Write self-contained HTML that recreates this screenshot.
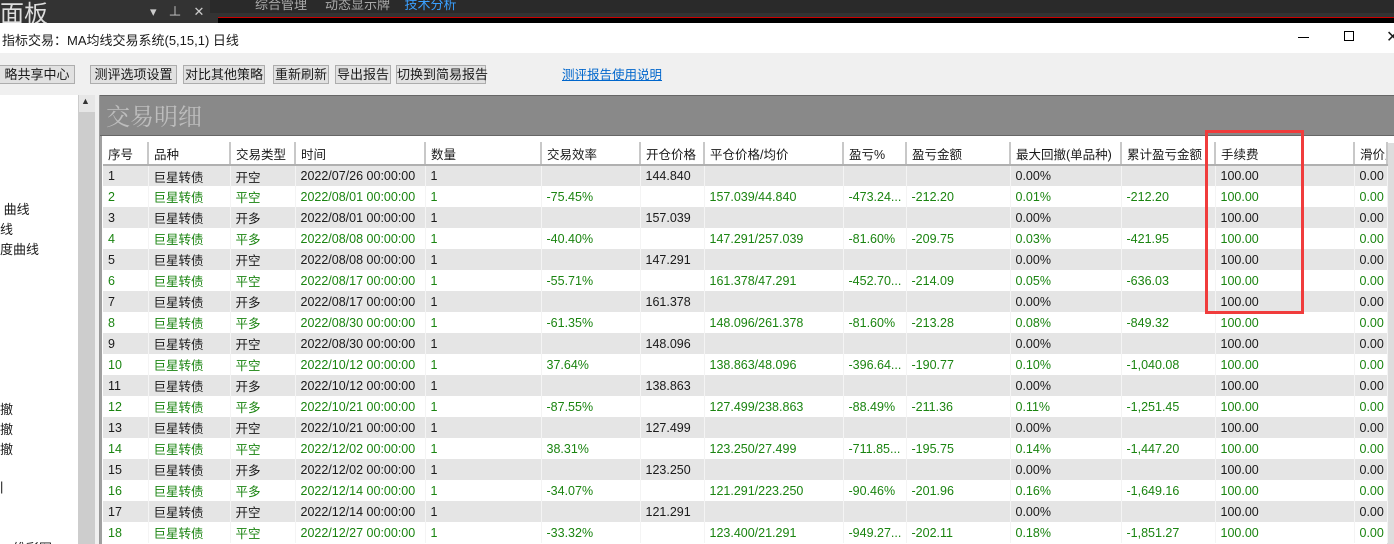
<!DOCTYPE html>
<html><head><meta charset="utf-8"><style>
*{margin:0;padding:0;box-sizing:border-box}
html,body{width:1394px;height:544px;overflow:hidden}
body{position:relative;background:#f0f0f0;font-family:"Liberation Sans","Noto Sans CJK SC",sans-serif;font-size:12px;color:#1a1a1a}
.abs{position:absolute}
.btn{position:absolute;top:65px;height:19px;border:1px solid #adadad;background:#e1e1e1;font-size:13px;line-height:17px;text-align:center;white-space:nowrap}
table{position:absolute;left:103px;top:142px;border-collapse:collapse;table-layout:fixed;width:1284px}
td,th{height:21px;padding:0 0 0 5px;white-space:nowrap;overflow:hidden;font-weight:normal;text-align:left;font-size:12.5px;border-right:1px solid #f4f4f4}
th{height:23px;background:#fff;border-right:2px solid #c8c8c8;border-bottom:2px solid #b0b0b0}
tr.o td{background:#e5e5e5}
tr.e td{background:#fff;color:#1a8410}
.lt{position:absolute;left:0;font-size:13px}
</style></head><body>
<div class="abs" style="left:0;top:0;width:1394px;height:23px;background:#333"></div>
<div class="abs" style="left:0;top:-6px;color:#ddd;font-size:24px">面板</div>
<div class="abs" style="left:150px;top:1px;color:#ccc;font-size:13px;letter-spacing:12px">▾⊥✕</div>
<div class="abs" style="left:210px;top:0;width:1184px;height:13px;background:#2a2a2a"></div>
<div class="abs" style="left:255px;top:-6px;color:#aaa;font-size:13px">综合管理 &nbsp;&nbsp;&nbsp; 动态显示牌 &nbsp;&nbsp; <span style="color:#3aa0ff">技术分析</span></div>
<div class="abs" style="left:218px;top:17px;width:1176px;height:6px;background:#000;border-top:1px solid #c00"></div>
<div class="abs" style="left:0;top:23px;width:1394px;height:30px;background:#fff"></div>
<div class="abs" style="left:2px;top:30px;font-size:13px">指标交易：MA均线交易系统(5,15,1) 日线</div>
<div class="abs" style="left:1298px;top:37px;width:11px;height:1px;background:#000"></div>
<div class="abs" style="left:1344px;top:31px;width:10px;height:10px;border:1px solid #000"></div>
<div class="abs" style="left:1386px;top:27px;font-size:16px">✕</div>
<div class="btn" style="left:-1px;width:76px">略共享中心</div>
<div class="btn" style="left:90px;width:87px">测评选项设置</div>
<div class="btn" style="left:183px;width:82px">对比其他策略</div>
<div class="btn" style="left:273px;width:56px">重新刷新</div>
<div class="btn" style="left:335px;width:56px">导出报告</div>
<div class="btn" style="left:396px;width:90px">切换到简易报告</div>
<div class="abs" style="left:562px;top:64px;font-size:12.5px;color:#0066cc;text-decoration:underline">测评报告使用说明</div>
<div class="abs" style="left:0;top:95px;width:78px;height:449px;background:#fff"></div>
<div class="abs" style="left:78px;top:95px;width:17px;height:449px;background:#e6e6e6;border-left:1px solid #ccc"></div>
<div class="abs" style="left:81px;top:96px;font-size:9px;color:#333">▲</div>
<div class="abs" style="left:78px;top:112px;width:17px;height:432px;background:#cdcdcd"></div>
<div class="abs" style="left:95px;top:95px;width:5px;height:449px;background:#f0f0f0;border-right:1px solid #999"></div>
<div class="lt" style="top:199px">&nbsp;曲线</div>
<div class="lt" style="top:219px">线</div>
<div class="lt" style="top:239px">度曲线</div>
<div class="lt" style="top:399px">撤</div>
<div class="lt" style="top:419px">撤</div>
<div class="lt" style="top:439px">撤</div>
<div class="lt" style="top:479px">|</div>
<div class="lt" style="top:538px">二维彩图</div>
<div class="abs" style="left:100px;top:95px;width:1294px;height:41px;background:#898989;border-top:1px solid #666;border-bottom:1px solid #666"></div>
<div class="abs" style="left:106px;top:97px;font-size:24px;color:#bdbdbd;font-family:'Noto Serif CJK SC',serif">交易明细</div>
<div class="abs" style="left:100px;top:136px;width:1294px;height:408px;background:#fff;border-left:2px solid #a0a0a0"></div>
<div class="abs" style="left:1387px;top:143px;width:7px;height:401px;background:#ddd"></div>
<table>
<colgroup><col style="width:45px"><col style="width:82px"><col style="width:65px"><col style="width:130px"><col style="width:116px"><col style="width:99px"><col style="width:64px"><col style="width:139px"><col style="width:63px"><col style="width:104px"><col style="width:111px"><col style="width:94px"><col style="width:139px"><col style="width:33px"></colgroup>
<tr><th>序号</th><th>品种</th><th>交易类型</th><th>时间</th><th>数量</th><th>交易效率</th><th>开仓价格</th><th>平仓价格/均价</th><th>盈亏%</th><th>盈亏金额</th><th>最大回撤(单品种)</th><th>累计盈亏金额</th><th>手续费</th><th>滑价成</th></tr>
<tr class="o"><td>1</td><td>巨星转债</td><td>开空</td><td>2022/07/26 00:00:00</td><td>1</td><td></td><td>144.840</td><td></td><td></td><td></td><td>0.00%</td><td></td><td>100.00</td><td>0.00</td></tr>
<tr class="e"><td>2</td><td>巨星转债</td><td>平空</td><td>2022/08/01 00:00:00</td><td>1</td><td>-75.45%</td><td></td><td>157.039/44.840</td><td>-473.24...</td><td>-212.20</td><td>0.01%</td><td>-212.20</td><td>100.00</td><td>0.00</td></tr>
<tr class="o"><td>3</td><td>巨星转债</td><td>开多</td><td>2022/08/01 00:00:00</td><td>1</td><td></td><td>157.039</td><td></td><td></td><td></td><td>0.00%</td><td></td><td>100.00</td><td>0.00</td></tr>
<tr class="e"><td>4</td><td>巨星转债</td><td>平多</td><td>2022/08/08 00:00:00</td><td>1</td><td>-40.40%</td><td></td><td>147.291/257.039</td><td>-81.60%</td><td>-209.75</td><td>0.03%</td><td>-421.95</td><td>100.00</td><td>0.00</td></tr>
<tr class="o"><td>5</td><td>巨星转债</td><td>开空</td><td>2022/08/08 00:00:00</td><td>1</td><td></td><td>147.291</td><td></td><td></td><td></td><td>0.00%</td><td></td><td>100.00</td><td>0.00</td></tr>
<tr class="e"><td>6</td><td>巨星转债</td><td>平空</td><td>2022/08/17 00:00:00</td><td>1</td><td>-55.71%</td><td></td><td>161.378/47.291</td><td>-452.70...</td><td>-214.09</td><td>0.05%</td><td>-636.03</td><td>100.00</td><td>0.00</td></tr>
<tr class="o"><td>7</td><td>巨星转债</td><td>开多</td><td>2022/08/17 00:00:00</td><td>1</td><td></td><td>161.378</td><td></td><td></td><td></td><td>0.00%</td><td></td><td>100.00</td><td>0.00</td></tr>
<tr class="e"><td>8</td><td>巨星转债</td><td>平多</td><td>2022/08/30 00:00:00</td><td>1</td><td>-61.35%</td><td></td><td>148.096/261.378</td><td>-81.60%</td><td>-213.28</td><td>0.08%</td><td>-849.32</td><td>100.00</td><td>0.00</td></tr>
<tr class="o"><td>9</td><td>巨星转债</td><td>开空</td><td>2022/08/30 00:00:00</td><td>1</td><td></td><td>148.096</td><td></td><td></td><td></td><td>0.00%</td><td></td><td>100.00</td><td>0.00</td></tr>
<tr class="e"><td>10</td><td>巨星转债</td><td>平空</td><td>2022/10/12 00:00:00</td><td>1</td><td>37.64%</td><td></td><td>138.863/48.096</td><td>-396.64...</td><td>-190.77</td><td>0.10%</td><td>-1,040.08</td><td>100.00</td><td>0.00</td></tr>
<tr class="o"><td>11</td><td>巨星转债</td><td>开多</td><td>2022/10/12 00:00:00</td><td>1</td><td></td><td>138.863</td><td></td><td></td><td></td><td>0.00%</td><td></td><td>100.00</td><td>0.00</td></tr>
<tr class="e"><td>12</td><td>巨星转债</td><td>平多</td><td>2022/10/21 00:00:00</td><td>1</td><td>-87.55%</td><td></td><td>127.499/238.863</td><td>-88.49%</td><td>-211.36</td><td>0.11%</td><td>-1,251.45</td><td>100.00</td><td>0.00</td></tr>
<tr class="o"><td>13</td><td>巨星转债</td><td>开空</td><td>2022/10/21 00:00:00</td><td>1</td><td></td><td>127.499</td><td></td><td></td><td></td><td>0.00%</td><td></td><td>100.00</td><td>0.00</td></tr>
<tr class="e"><td>14</td><td>巨星转债</td><td>平空</td><td>2022/12/02 00:00:00</td><td>1</td><td>38.31%</td><td></td><td>123.250/27.499</td><td>-711.85...</td><td>-195.75</td><td>0.14%</td><td>-1,447.20</td><td>100.00</td><td>0.00</td></tr>
<tr class="o"><td>15</td><td>巨星转债</td><td>开多</td><td>2022/12/02 00:00:00</td><td>1</td><td></td><td>123.250</td><td></td><td></td><td></td><td>0.00%</td><td></td><td>100.00</td><td>0.00</td></tr>
<tr class="e"><td>16</td><td>巨星转债</td><td>平多</td><td>2022/12/14 00:00:00</td><td>1</td><td>-34.07%</td><td></td><td>121.291/223.250</td><td>-90.46%</td><td>-201.96</td><td>0.16%</td><td>-1,649.16</td><td>100.00</td><td>0.00</td></tr>
<tr class="o"><td>17</td><td>巨星转债</td><td>开空</td><td>2022/12/14 00:00:00</td><td>1</td><td></td><td>121.291</td><td></td><td></td><td></td><td>0.00%</td><td></td><td>100.00</td><td>0.00</td></tr>
<tr class="e"><td>18</td><td>巨星转债</td><td>平空</td><td>2022/12/27 00:00:00</td><td>1</td><td>-33.32%</td><td></td><td>123.400/21.291</td><td>-949.27...</td><td>-202.11</td><td>0.18%</td><td>-1,851.27</td><td>100.00</td><td>0.00</td></tr>
</table>
<div class="abs" style="left:1205px;top:130px;width:99px;height:184px;border:3px solid #f03c3c"></div>
</body></html>
